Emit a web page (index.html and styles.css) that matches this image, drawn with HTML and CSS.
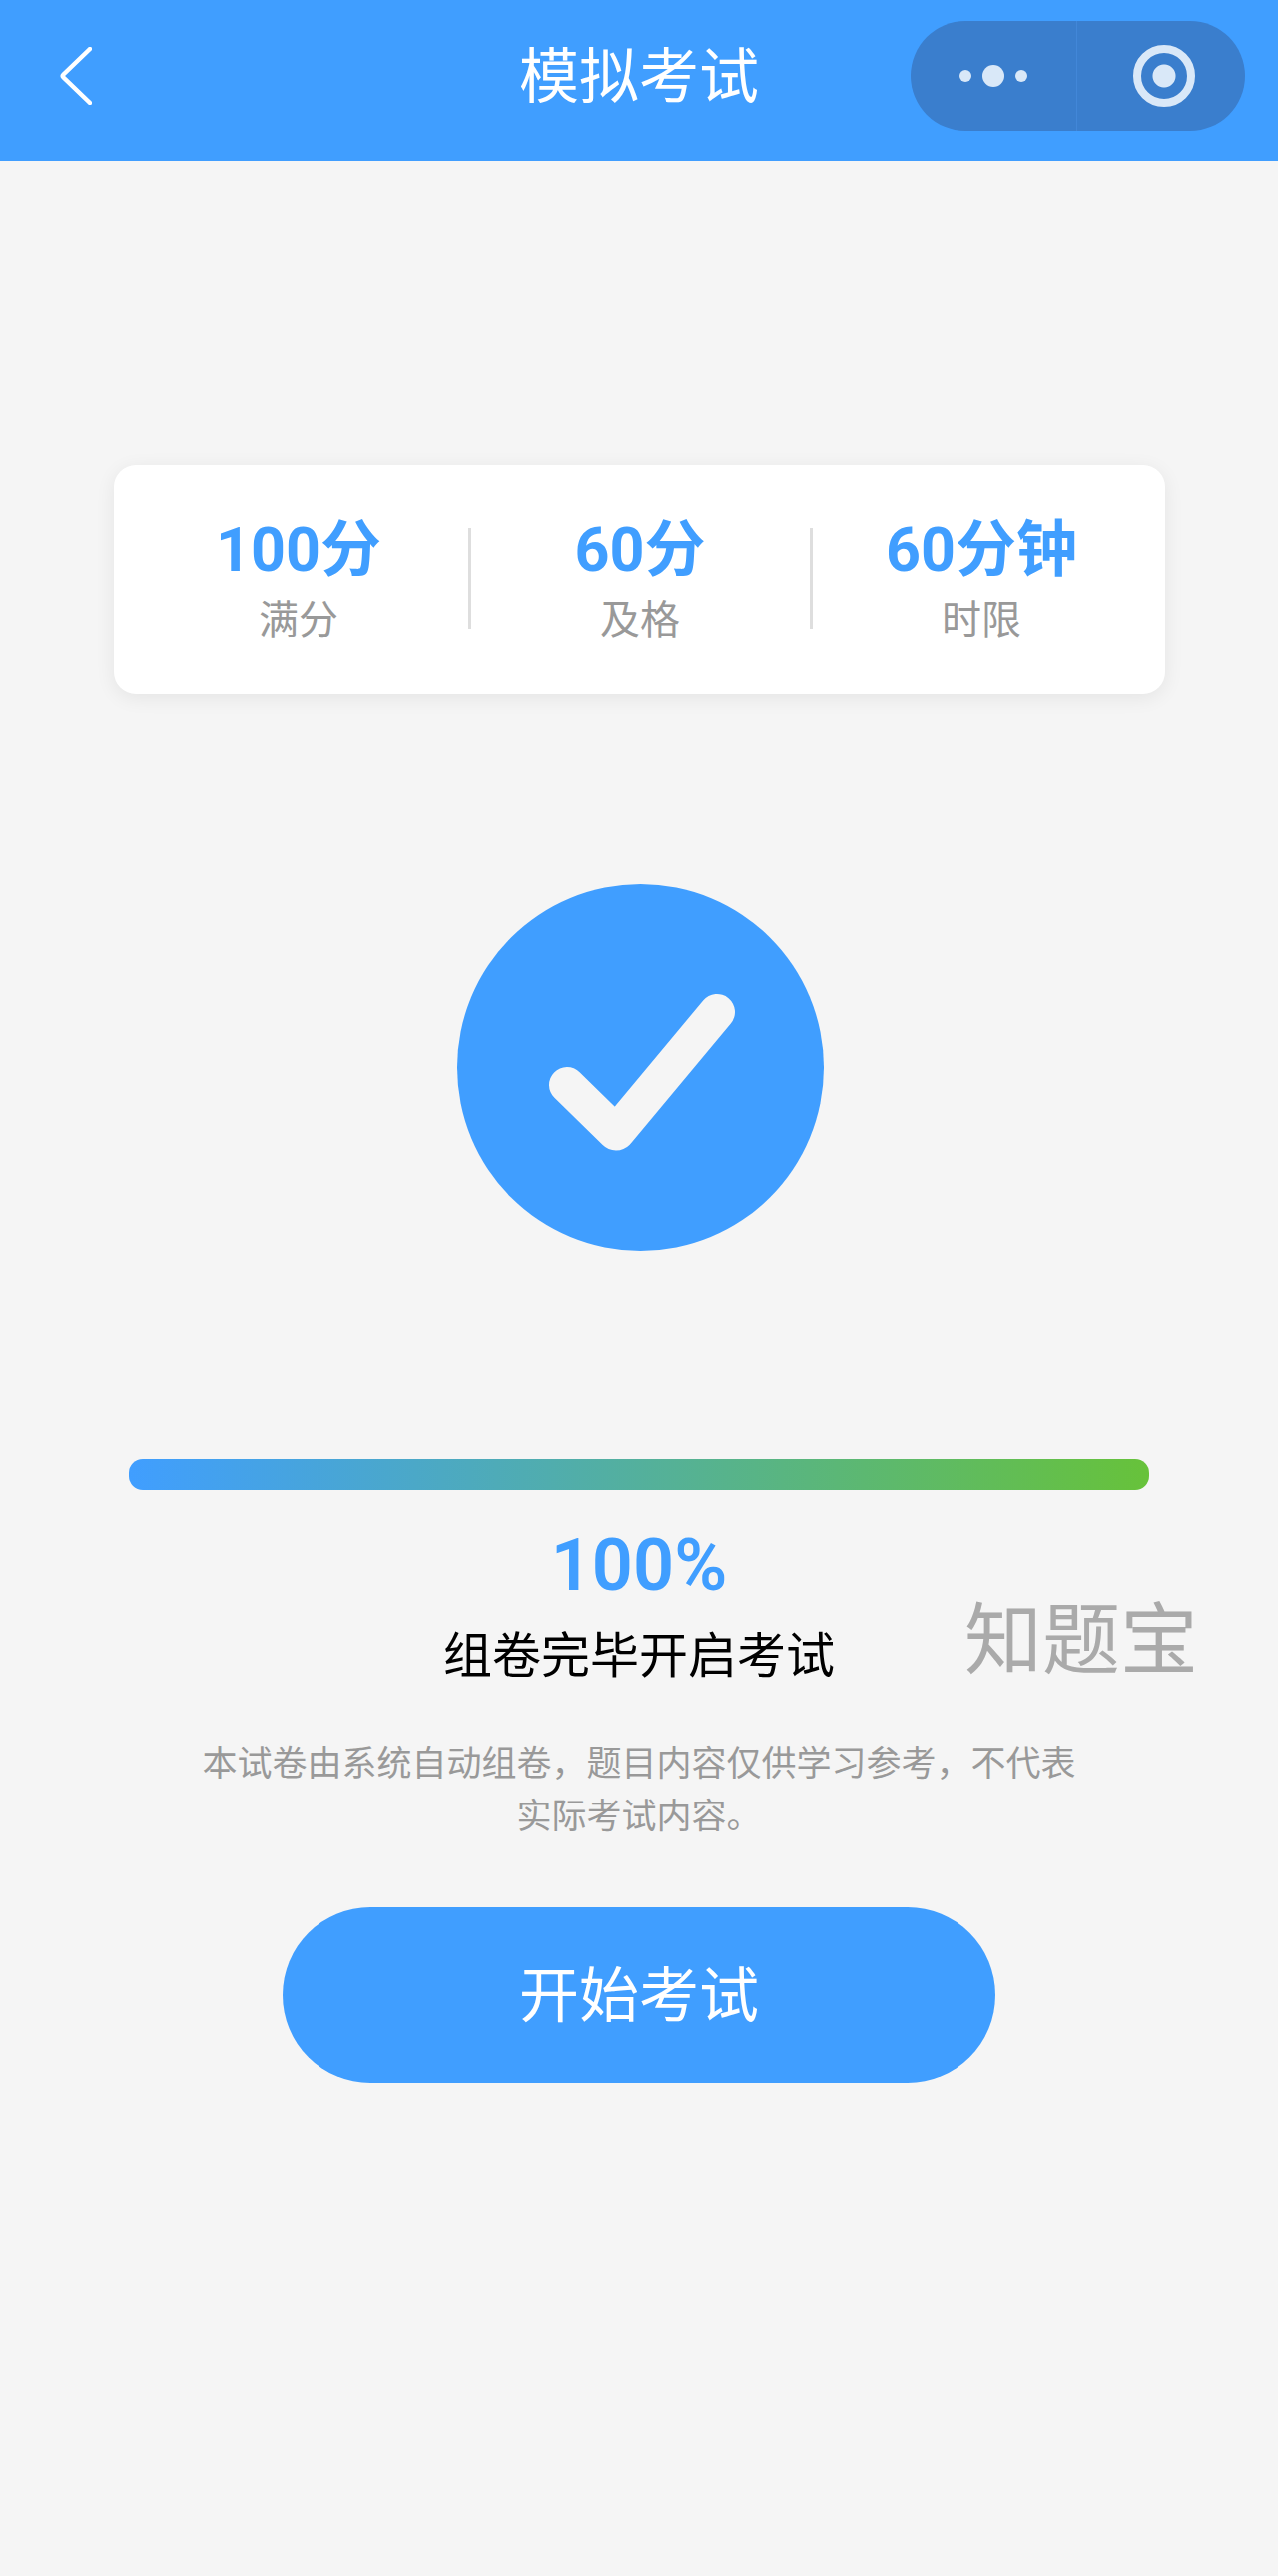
FILE: index.html
```html
<!DOCTYPE html>
<html lang="zh-CN">
<head>
    <meta charset="UTF-8">
    <meta name="viewport" content="width=device-width, initial-scale=1.0">
    <title>模拟考试</title>
    <link rel="stylesheet" href="styles.css">
</head>
<body>

<!-- Barra superiore -->
<header class="nav-bar">
    <svg class="back-icon" viewBox="0 0 32 58" aria-label="返回">
        <path d="M30 2 L3.5 27.5 Q2 29 3.5 30.5 L30 56" fill="none" stroke="#fff" stroke-width="4.5" stroke-linecap="round" stroke-linejoin="round"/>
    </svg>
    <h1 class="nav-title">模拟考试</h1>
    <div class="capsule">
        <div class="capsule-more">
            <span class="dot"></span>
            <span class="dot dot-big"></span>
            <span class="dot"></span>
        </div>
        <div class="capsule-close">
            <span class="ring"></span>
        </div>
    </div>
</header>

<main class="page">
    <!-- Riepilogo esame -->
    <section class="summary-card">
        <div class="summary-item">
            <div class="summary-value">100分</div>
            <div class="summary-label">满分</div>
        </div>
        <div class="summary-item">
            <div class="summary-value">60分</div>
            <div class="summary-label">及格</div>
        </div>
        <div class="summary-item">
            <div class="summary-value">60分钟</div>
            <div class="summary-label">时限</div>
        </div>
    </section>

    <svg class="done-icon" viewBox="0 0 367 367" aria-label="完成">
        <circle cx="183.5" cy="183.5" r="183.5" fill="#409eff"/>
        <path d="M110 201 L158 248 Q159 249 160 248 L260 128" fill="none" stroke="#f5f5f5" stroke-width="36" stroke-linecap="round" stroke-linejoin="round"/>
    </svg>

    <div class="progress-bar"></div>
    <div class="progress-value">100%</div>

    <div class="status-row">
        <div class="status-text">组卷完毕开启考试</div>
        <div class="watermark">知题宝</div>
    </div>

    <p class="notice">本试卷由系统自动组卷，题目内容仅供学习参考，不代表实际考试内容。</p>

    <button class="start-button">开始考试</button>
</main>

</body>
</html>
```

FILE: styles.css
```css
/* Impostazioni generali */
body {
    margin: 0;
    min-height: 100vh;
    background-color: #f5f5f5;
    font-family: Roboto, "Noto Sans CJK SC", sans-serif;
}

/* Barra superiore */
.nav-bar {
    position: relative;
    display: flex;
    align-items: center;
    justify-content: space-between;
    height: 161px;
    padding: 0 33px 9px 60px;
    box-sizing: border-box;
    background-color: #409eff;
}

.back-icon {
    width: 32px;
    height: 58px;
}

.nav-title {
    position: absolute;
    left: 0;
    right: 0;
    top: 43px;
    margin: 0;
    font-size: 60px;
    font-weight: 400;
    line-height: 70px;
    text-align: center;
    color: #fff;
}

.capsule {
    display: flex;
    width: 335px;
    height: 110px;
    border-radius: 55px;
    background-color: #3a7ecd;
}

.capsule-more {
    display: flex;
    align-items: center;
    justify-content: center;
    gap: 11px;
    width: 167px;
    box-sizing: border-box;
    border-right: 1px solid #4287d8;
}

.dot {
    width: 12px;
    height: 12px;
    border-radius: 50%;
    background-color: #d9e8f8;
}

.dot-big {
    width: 22px;
    height: 22px;
}

.capsule-close {
    display: flex;
    align-items: center;
    justify-content: center;
    flex: 1;
    padding-left: 6px;
}

.ring {
    width: 62px;
    height: 62px;
    box-sizing: border-box;
    border: 8px solid #d9e8f8;
    border-radius: 50%;
    background: radial-gradient(circle, #d9e8f8 0 11px, transparent 12px);
}

/* Contenuto */
.page {
    display: flex;
    flex-direction: column;
    align-items: center;
}

.summary-card {
    display: flex;
    align-items: center;
    width: 1053px;
    height: 229px;
    margin-top: 305px;
    padding: 0 14px 2px 16px;
    box-sizing: border-box;
    border-radius: 22px;
    background-color: #fff;
    box-shadow: 0 4px 20px rgba(0, 0, 0, 0.07);
}

.summary-item {
    flex: 1;
    height: 101px;
    display: flex;
    flex-direction: column;
    align-items: center;
    justify-content: center;
    border-right: 3px solid #dedede;
}

.summary-item:last-child {
    border-right: none;
}

.summary-value {
    margin-top: -1px;
    font-size: 61px;
    font-weight: 700;
    line-height: 70px;
    color: #409eff;
}

.summary-label {
    margin-top: 11px;
    margin-bottom: -4px;
    font-size: 40px;
    line-height: 50px;
    color: #999;
}

.done-icon {
    width: 367px;
    height: 367px;
    margin: 191px 0 0 3px;
}

.progress-bar {
    width: 1022px;
    height: 31px;
    margin-top: 209px;
    border-radius: 14px;
    background: linear-gradient(to right, #409eff, #67c23a);
}

.progress-value {
    margin-top: 34px;
    font-size: 72px;
    font-weight: 600;
    line-height: 84px;
    color: #409eff;
}

.status-row {
    position: relative;
    width: 100%;
    margin-top: 15px;
    text-align: center;
}

.status-text {
    font-size: 49px;
    line-height: 68px;
    color: #000;
}

.watermark {
    position: absolute;
    left: 966px;
    top: -26px;
    font-size: 78px;
    line-height: 90px;
    color: #aaa;
}

.notice {
    width: 900px;
    margin: 47px 0 0;
    font-size: 35px;
    line-height: 53px;
    text-align: center;
    color: #999;
}

.start-button {
    width: 714px;
    height: 176px;
    margin-top: 64px;
    padding: 0 0 9px;
    border: none;
    border-radius: 88px;
    background-color: #409eff;
    font-family: inherit;
    font-size: 60px;
    color: #fff;
}
```
